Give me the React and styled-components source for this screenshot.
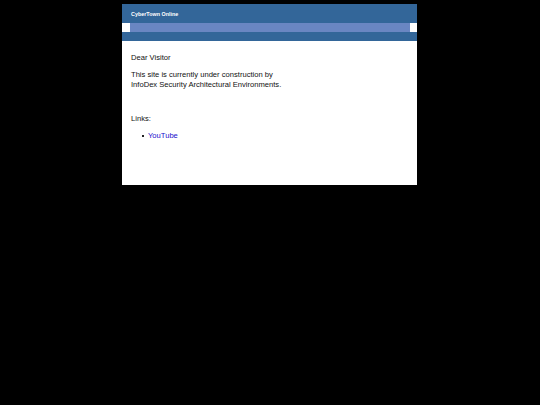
import React from "react";
import styled, { createGlobalStyle } from "styled-components";

const Global = createGlobalStyle`
  html, body { margin: 0; padding: 0; background: #000; }
  body { font-family: "Liberation Sans", Arial, sans-serif; }
`;

const Page = styled.div`
  width: 295px;
  margin: 4px 0 0 calc(50% - 148px);
  display: flex;
  flex-direction: column;
`;

const Header = styled.div`
  height: 19px;
  background: #336699;
  display: flex;
  align-items: center;
  padding-left: 9px;
  color: #fff;
  font-weight: bold;
  font-size: 5.4px;
`;

const Bar = styled.div`
  height: 9px;
  display: flex;
  background: #fff;
`;

const BarFill = styled.div`
  flex: 1;
  margin: 0 7px 0 8px;
  background: #6a86c2;
`;

const Strip = styled.div`
  height: 9px;
  background: #336699;
`;

const Content = styled.div`
  background: #fff;
  height: 144px;
  box-sizing: border-box;
  padding: 12px 9px 0;
  font-size: 7.6px;
  line-height: 10px;
  color: #111;
`;

const P = styled.p`
  margin: 0 0 ${(p) => p.$after || 0}px;
`;

const List = styled.ul`
  margin: 0;
  padding-left: 17px;
  list-style: none;
`;

const Item = styled.li`
  position: relative;
  &::before {
    content: "";
    position: absolute;
    left: -6px;
    top: 4px;
    width: 2px;
    height: 2px;
    background: #222;
  }
`;

const Link = styled.a`
  color: #1a0dcc;
  text-decoration: none;
`;

export default function App() {
  return (
    <>
      <Global />
      <Page>
        <Header>CyberTown Online</Header>
        <Bar>
          <BarFill />
        </Bar>
        <Strip />
        <Content>
          <P $after={7}>Dear Visitor</P>
          <P $after={24}>
            This site is currently under construction by
            <br />
            InfoDex Security Architectural Environments.
          </P>
          <P $after={7}>Links:</P>
          <List>
            <Item>
              <Link href="#">YouTube</Link>
            </Item>
          </List>
        </Content>
      </Page>
    </>
  );
}
